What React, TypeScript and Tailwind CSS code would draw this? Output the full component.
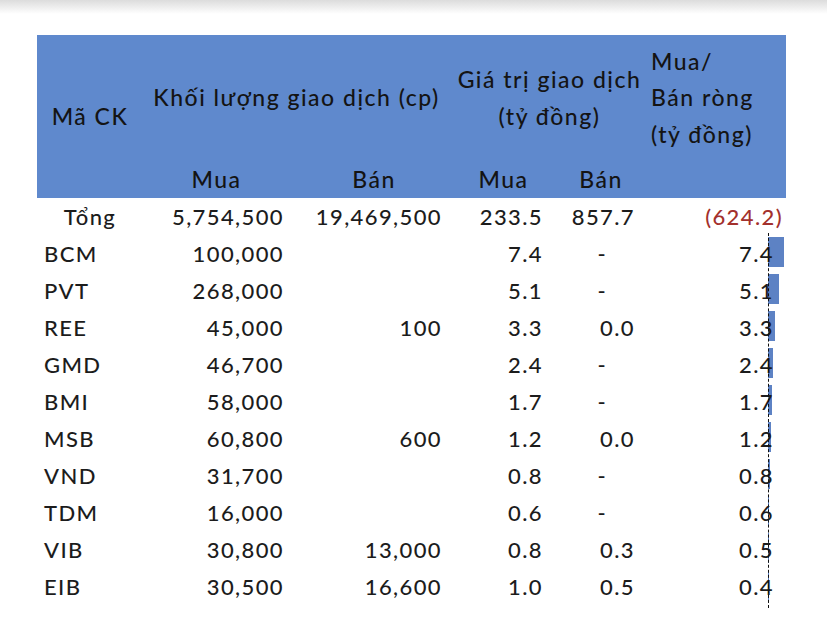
import React from "react";

type Row = { code: string; vm: string; vb: string; gm: string; gb: string; net: string; bar: number };

const rows: Row[] = [
  { code: "BCM", vm: "100,000", vb: "", gm: "7.4", gb: "-", net: "7.4", bar: 7.4 },
  { code: "PVT", vm: "268,000", vb: "", gm: "5.1", gb: "-", net: "5.1", bar: 5.1 },
  { code: "REE", vm: "45,000", vb: "100", gm: "3.3", gb: "0.0", net: "3.3", bar: 3.3 },
  { code: "GMD", vm: "46,700", vb: "", gm: "2.4", gb: "-", net: "2.4", bar: 2.4 },
  { code: "BMI", vm: "58,000", vb: "", gm: "1.7", gb: "-", net: "1.7", bar: 1.7 },
  { code: "MSB", vm: "60,800", vb: "600", gm: "1.2", gb: "0.0", net: "1.2", bar: 1.2 },
  { code: "VND", vm: "31,700", vb: "", gm: "0.8", gb: "-", net: "0.8", bar: 0.8 },
  { code: "TDM", vm: "16,000", vb: "", gm: "0.6", gb: "-", net: "0.6", bar: 0.6 },
  { code: "VIB", vm: "30,800", vb: "13,000", gm: "0.8", gb: "0.3", net: "0.5", bar: 0.5 },
  { code: "EIB", vm: "30,500", vb: "16,600", gm: "1.0", gb: "0.5", net: "0.4", bar: 0.4 },
];

const cols = "grid grid-cols-[106px_147px_158px_101px_96px_141px]";

export default function App() {
  return (
    <div
      className="w-[827px] h-[643px] bg-white overflow-hidden text-[#1c1c1c] font-medium"
      style={{ fontFamily: "Lato, 'Open Sans', sans-serif" }}
    >
      <div className="h-[14px] bg-gradient-to-b from-[#dcdcdc] to-white" />
      <div className="h-[21px]" />
      <div className="ml-[37px] w-[749px]">
        {/* Header */}
        <div className={`${cols} grid-rows-[125px_38px] bg-[#5f89cd] text-[#141414] text-[23px] tracking-[1.5px]`}>
          <div className="row-span-2 flex items-center justify-center">Mã CK</div>
          <div className="col-span-2 flex items-center justify-center pl-[2px]">Khối lượng giao dịch (cp)</div>
          <div className="col-span-2 flex flex-col items-center justify-center leading-[37px] pl-[6px]">
            <span>Giá trị giao dịch</span>
            <span>(tỷ đồng)</span>
          </div>
          <div className="flex flex-col justify-center leading-[36.5px] pl-[6px]">
            <span>Mua/</span>
            <span>Bán ròng</span>
            <span>(tỷ đồng)</span>
          </div>
          <div className="flex items-center justify-center">Mua</div>
          <div className="flex items-center justify-center pl-[10px]">Bán</div>
          <div className="flex items-center justify-center pl-[10px]">Mua</div>
          <div className="flex items-center justify-center pl-[8px]">Bán</div>
          <div />
        </div>

        {/* Body */}
        <div className="relative text-[22px] tracking-[1.4px]">
          <div className={`${cols} h-[37px] items-center`}>
            <div className="text-center">Tổng</div>
            <div className="text-right pr-[6px]">5,754,500</div>
            <div className="text-right pr-[6px]">19,469,500</div>
            <div className="text-right pr-[6px]">233.5</div>
            <div className="text-right pr-[10px]">857.7</div>
            <div className="text-right pr-[3px] text-[#a3302c]">(624.2)</div>
          </div>
          {rows.map((r) => (
            <div key={r.code} className={`${cols} h-[37px] items-center`}>
              <div className="pl-[7px]">{r.code}</div>
              <div className="text-right pr-[6px]">{r.vm}</div>
              <div className="text-right pr-[6px]">{r.vb}</div>
              <div className="text-right pr-[6px]">{r.gm}</div>
              <div className={r.gb === "-" ? "text-right pr-[38px]" : "text-right pr-[10px]"}>{r.gb}</div>
              <div className="relative h-full flex items-center justify-end pr-[12px]">
                <div
                  className="absolute left-[123px] top-[2px] h-[30px] bg-[#5d82c4]"
                  style={{ width: `${r.bar * 2.1}px` }}
                />
                <span className="relative">{r.net}</span>
              </div>
            </div>
          ))}
          <div className="absolute left-[731px] top-[35px] h-[375px] border-l border-dashed border-[#111]" />
        </div>
      </div>
    </div>
  );
}
